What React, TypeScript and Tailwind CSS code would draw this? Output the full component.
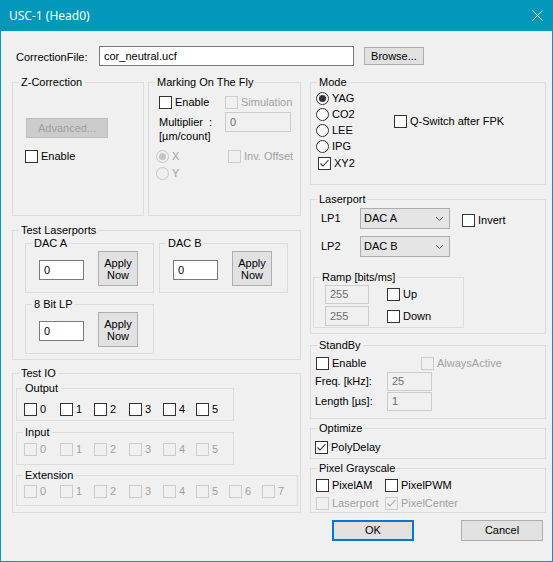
import React from "react";

type Kids = { children?: React.ReactNode; className?: string };

function Group({ label, className = "", children }: Kids & { label: string }) {
  return (
    <div className={`relative shrink-0 border border-[#dcdcdc] ${className}`}>
      <span className="absolute left-[6px] top-[-7px] bg-[#f0f0f0] px-[2px] leading-[13px] whitespace-nowrap">
        {label}
      </span>
      {children}
    </div>
  );
}

function Tick({ color }: { color: string }) {
  return (
    <svg width="11" height="11" viewBox="0 0 11 11">
      <polyline points="1.5,5.5 4,8 9.5,2" fill="none" stroke={color} strokeWidth="1.1" />
    </svg>
  );
}

function Check({
  label,
  checked,
  disabled,
  className = "",
}: {
  label: string;
  checked?: boolean;
  disabled?: boolean;
  className?: string;
}) {
  return (
    <div
      className={`flex items-center gap-[3px] h-[13px] shrink-0 whitespace-nowrap ${
        disabled ? "text-[#a0a0a0]" : ""
      } ${className}`}
    >
      <span
        className={`w-[13px] h-[13px] shrink-0 border flex items-center justify-center ${
          disabled ? "border-[#cccccc] bg-[#f0f0f0]" : "border-[#333333] bg-white"
        }`}
      >
        {checked && <Tick color={disabled ? "#a8a8a8" : "#333333"} />}
      </span>
      <span>{label}</span>
    </div>
  );
}

function Radio({
  label,
  checked,
  disabled,
  className = "",
}: {
  label: string;
  checked?: boolean;
  disabled?: boolean;
  className?: string;
}) {
  return (
    <div
      className={`flex items-center gap-[3px] shrink-0 whitespace-nowrap ${
        disabled ? "text-[#a0a0a0]" : ""
      } ${className}`}
    >
      <span
        className={`w-[13px] h-[13px] shrink-0 rounded-full border flex items-center justify-center ${
          disabled ? "border-[#c4c4c4] bg-[#f0f0f0]" : "border-[#333333] bg-white"
        }`}
      >
        {checked && (
          <span className={`w-[7px] h-[7px] rounded-full ${disabled ? "bg-[#c4c4c4]" : "bg-[#333333]"}`} />
        )}
      </span>
      <span>{label}</span>
    </div>
  );
}

function TextBox({ value, disabled, className = "" }: { value: string; disabled?: boolean; className?: string }) {
  return (
    <div
      className={`shrink-0 border flex items-center pl-[4px] ${
        disabled ? "border-[#cccccc] bg-[#f0f0f0] text-[#6d6d6d]" : "border-[#7a7a7a] bg-white"
      } ${className}`}
    >
      {value}
    </div>
  );
}

function Combo({ value }: { value: string }) {
  return (
    <div className="w-[90px] h-[21px] shrink-0 border border-[#adadad] bg-[#e5e5e5] flex items-center justify-between pl-[3px] pr-[5px]">
      <span>{value}</span>
      <svg width="9" height="6" viewBox="0 0 9 6">
        <polyline points="1,1 4.5,4.5 8,1" fill="none" stroke="#555555" strokeWidth="1" />
      </svg>
    </div>
  );
}

function Apply() {
  return (
    <div className="ml-[14px] mt-[7px] w-[40px] h-[35px] shrink-0 border border-[#adadad] bg-[#e1e1e1] flex items-center justify-center text-center leading-[12px]">
      Apply
      <br />
      Now
    </div>
  );
}

function DacGroup({ label }: { label: string }) {
  return (
    <Group label={label} className="w-[129px] h-[50px]">
      <div className="flex items-start pl-[13px]">
        <TextBox value="0" className="mt-[16px] w-[45px] h-[20px]" />
        <Apply />
      </div>
    </Group>
  );
}

const ioWidths = ["w-[36px]", "w-[34px]", "w-[35px]", "w-[34px]", "w-[33px]", "w-[33px]", "w-[33px]", "w-[33px]"];

function IoRow({ count, disabled }: { count: number; disabled?: boolean }) {
  return (
    <div className="flex pl-[7px]">
      {Array.from({ length: count }, (_, i) => (
        <Check key={i} label={String(i)} disabled={disabled} className={ioWidths[i]} />
      ))}
    </div>
  );
}

export default function App() {
  return (
    <div className="w-[553px] h-[562px] bg-[#0398bb] px-[1px] pb-[1px] flex flex-col font-['Liberation_Sans',Arial,sans-serif] text-[11px] leading-[13px] text-black">
      <div className="h-[31px] shrink-0 flex items-center justify-between pl-[8px] pr-[9px] text-white text-[12px] font-['Noto_Sans',sans-serif]">
        <span>USC-1 (Head0)</span>
        <svg width="11" height="11" viewBox="0 0 11 11">
          <path d="M0.5 0.5 L10.5 10.5 M10.5 0.5 L0.5 10.5" stroke="white" strokeWidth="1" />
        </svg>
      </div>

      <div className="flex-1 bg-[#f0f0f0] pl-[11px]">
        <div className="flex items-center ml-[4px] mt-[15px]">
          <span className="w-[83px] pt-[3px]">CorrectionFile:</span>
          <TextBox value="cor_neutral.ucf" className="w-[255px] h-[20px]" />
          <div className="ml-[10px] w-[60px] h-[18px] border border-[#adadad] bg-[#e1e1e1] flex items-center justify-center">
            Browse...
          </div>
        </div>

        <div className="flex gap-[9px] mt-[16px]">
          {/* left column */}
          <div className="w-[289px] flex flex-col">
            <div className="flex gap-[4px]">
              <Group label="Z-Correction" className="w-[132px] h-[134px]">
                <div className="flex flex-col items-start pl-[13px] pt-[35px]">
                  <div className="w-[82px] h-[20px] border border-[#bfbfbf] bg-[#cccccc] text-[#a0a0a0] flex items-center justify-center">
                    Advanced...
                  </div>
                  <Check label="Enable" className="mt-[12px] ml-[-1px]" />
                </div>
              </Group>

              <Group label="Marking On The Fly" className="w-[153px] h-[134px]">
                <div className="flex flex-col pl-[10px] pt-[13px]">
                  <div className="flex">
                    <Check label="Enable" className="w-[66px]" />
                    <Check label="Simulation" disabled />
                  </div>
                  <div className="flex items-start mt-[3px]">
                    <div className="w-[66px] pt-[3px] leading-[14px] whitespace-nowrap">
                      Multiplier<span className="ml-[6px]">:</span>
                      <br />
                      [µm/count]
                    </div>
                    <TextBox value="0" disabled className="w-[66px] h-[20px]" />
                  </div>
                  <div className="flex items-center mt-[7px] ml-[-3px] h-[13px]">
                    <Radio label="X" checked disabled className="w-[72px]" />
                    <Check label="Inv. Offset" disabled className="w-[68px] overflow-hidden" />
                  </div>
                  <Radio label="Y" disabled className="mt-[4px] ml-[-3px]" />
                </div>
              </Group>
            </div>

            <Group label="Test Laserports" className="mt-[14px] h-[130px]">
              <div className="grid grid-cols-[129px_129px] gap-x-[5px] gap-y-[11px] pl-[12px] pt-[12px]">
                <DacGroup label="DAC A" />
                <DacGroup label="DAC B" />
                <DacGroup label="8 Bit LP" />
              </div>
            </Group>

            <Group label="Test IO" className="mt-[13px] h-[140px]">
              <div className="flex flex-col pl-[3px] pt-[14px]">
                <Group label="Output" className="w-[218px] h-[33px]">
                  <div className="pt-[14px]">
                    <IoRow count={6} />
                  </div>
                </Group>
                <Group label="Input" className="mt-[11px] w-[218px] h-[33px]">
                  <div className="pt-[10px]">
                    <IoRow count={6} disabled />
                  </div>
                </Group>
                <Group label="Extension" className="mt-[10px] w-[282px] h-[31px]">
                  <div className="pt-[9px]">
                    <IoRow count={8} disabled />
                  </div>
                </Group>
              </div>
            </Group>
          </div>

          {/* right column */}
          <div className="w-[236px] flex flex-col">
            <Group label="Mode" className="h-[103px]">
              <div className="flex items-start pl-[5px] pt-[7px]">
                <div className="w-[78px] flex flex-col">
                  <Radio label="YAG" checked className="h-[16px]" />
                  <Radio label="CO2" className="h-[16px]" />
                  <Radio label="LEE" className="h-[16px]" />
                  <Radio label="IPG" className="h-[16px]" />
                  <Check label="XY2" checked className="mt-[3px] ml-[2px]" />
                </div>
                <Check label="Q-Switch after FPK" className="mt-[25px]" />
              </div>
            </Group>

            <Group label="Laserport" className="mt-[14px] h-[135px]">
              <div className="flex flex-col pl-[2px] pt-[8px]">
                <div className="flex items-center h-[21px] pl-[8px]">
                  <span className="w-[39px]">LP1</span>
                  <Combo value="DAC A" />
                  <Check label="Invert" className="ml-[12px] mt-[3px]" />
                </div>
                <div className="flex items-center h-[21px] pl-[8px] mt-[7px]">
                  <span className="w-[39px]">LP2</span>
                  <Combo value="DAC B" />
                </div>
                <Group label="Ramp [bits/ms]" className="mt-[20px] w-[151px] h-[51px]">
                  <div className="flex flex-col pl-[11px] pt-[7px]">
                    <div className="flex items-center">
                      <TextBox value="255" disabled className="w-[44px] h-[19px]" />
                      <Check label="Up" className="ml-[18px]" />
                    </div>
                    <div className="flex items-center mt-[2px]">
                      <TextBox value="255" disabled className="w-[44px] h-[20px]" />
                      <Check label="Down" className="ml-[18px]" />
                    </div>
                  </div>
                </Group>
              </div>
            </Group>

            <Group label="StandBy" className="mt-[11px] h-[74px]">
              <div className="flex flex-col pl-[4px] pt-[11px]">
                <div className="flex">
                  <Check label="Enable" className="ml-[1px] w-[105px]" />
                  <Check label="AlwaysActive" disabled />
                </div>
                <div className="flex items-center mt-[2px]">
                  <span className="w-[72px] whitespace-nowrap">Freq. [kHz]:</span>
                  <TextBox value="25" disabled className="w-[45px] h-[19px]" />
                </div>
                <div className="flex items-center mt-[1px]">
                  <span className="w-[72px] whitespace-nowrap">Length [µs]:</span>
                  <TextBox value="1" disabled className="w-[45px] h-[19px]" />
                </div>
              </div>
            </Group>

            <Group label="Optimize" className="mt-[9px] h-[31px]">
              <div className="pl-[4px] pt-[12px]">
                <Check label="PolyDelay" checked />
              </div>
            </Group>

            <Group label="Pixel Grayscale" className="mt-[9px] h-[45px]">
              <div className="grid grid-cols-[69px_auto] gap-y-[5px] pl-[5px] pt-[10px]">
                <Check label="PixelAM" />
                <Check label="PixelPWM" />
                <Check label="Laserport" disabled />
                <Check label="PixelCenter" checked disabled />
              </div>
            </Group>

            <div className="flex pl-[22px] mt-[7px]">
              <div className="w-[82px] h-[21px] border-2 border-[#0078d7] bg-[#e1e1e1] flex items-center justify-center">
                OK
              </div>
              <div className="ml-[47px] w-[82px] h-[21px] border border-[#adadad] bg-[#e1e1e1] flex items-center justify-center">
                Cancel
              </div>
            </div>
          </div>
        </div>
      </div>
    </div>
  );
}
